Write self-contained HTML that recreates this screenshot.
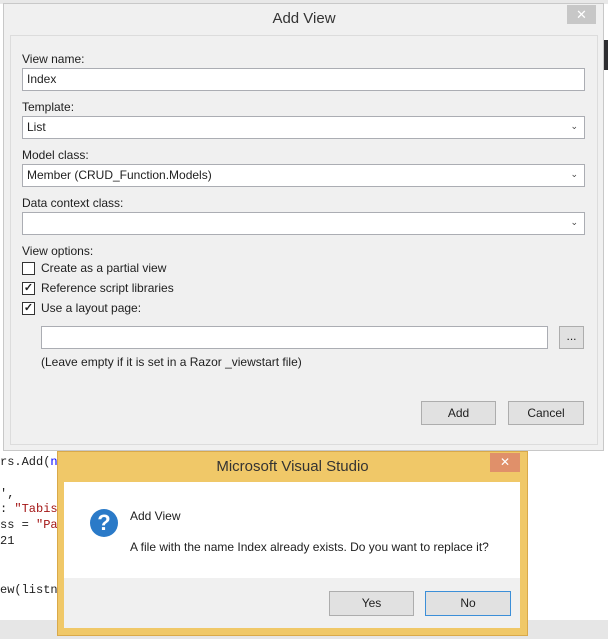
<!DOCTYPE html>
<html><head><style>
*{box-sizing:border-box;margin:0;padding:0}
body{width:608px;height:639px;overflow:hidden;background:#fff;font-family:"Liberation Sans",sans-serif;font-size:12px;color:#1e1e1e;position:relative}
.a{position:absolute}
.win{left:3px;top:3px;width:601px;height:448px;background:#f0f0f0;border:1px solid #c8c8c8}
.panel{left:10px;top:35px;width:588px;height:410px;background:#f0f0f0;border:1px solid #dcdcdc}
.lbl{left:22px;font-size:12px}
.inp{left:22px;width:563px;height:23px;background:#fff;border:1px solid #abadb3;padding:3px 4px}
.arr{position:absolute;right:6px;top:4px;font-size:9px;color:#444}
.cb{left:22px;width:13px;height:13px;background:#fff;border:1px solid #333;font-size:11px;line-height:11px;text-align:center;font-weight:bold}
.btn{background:#e1e1e1;border:1px solid #adadad;text-align:center;line-height:22px}
.code{font-family:"Liberation Mono",monospace;font-size:12px;left:0}
</style></head><body>
<div class="a" style="left:0;top:0;width:608px;height:4px;background:#e8e8e8"></div>
<div class="a" style="left:601px;top:40px;width:7px;height:30px;background:#2d2d30"></div>
<div class="a win"></div>
<div class="a" style="left:0;top:10px;width:608px;text-align:center;font-size:15px;color:#333">Add View</div>
<div class="a" style="left:567px;top:5px;width:29px;height:19px;background:#c7c7c7;color:#fff;text-align:center;line-height:19px;font-size:13px">✕</div>
<div class="a panel"></div>
<div class="a lbl" style="top:52px">View name:</div>
<div class="a inp" style="top:68px">Index</div>
<div class="a lbl" style="top:100px">Template:</div>
<div class="a inp" style="top:116px">List<span class="arr">⌄</span></div>
<div class="a lbl" style="top:148px">Model class:</div>
<div class="a inp" style="top:164px">Member (CRUD_Function.Models)<span class="arr">⌄</span></div>
<div class="a lbl" style="top:196px">Data context class:</div>
<div class="a inp" style="top:212px"><span class="arr">⌄</span></div>
<div class="a lbl" style="top:244px">View options:</div>
<div class="a cb" style="top:262px"></div><div class="a" style="left:41px;top:261px">Create as a partial view</div>
<div class="a cb" style="top:282px">✓</div><div class="a" style="left:41px;top:281px">Reference script libraries</div>
<div class="a cb" style="top:302px">✓</div><div class="a" style="left:41px;top:301px">Use a layout page:</div>
<div class="a" style="left:41px;top:326px;width:507px;height:23px;background:#fff;border:1px solid #abadb3"></div>
<div class="a btn" style="left:559px;top:326px;width:25px;height:23px;line-height:18px">...</div>
<div class="a" style="left:41px;top:355px">(Leave empty if it is set in a Razor _viewstart file)</div>
<div class="a btn" style="left:421px;top:401px;width:75px;height:24px">Add</div>
<div class="a btn" style="left:508px;top:401px;width:76px;height:24px">Cancel</div>

<div class="a code" style="top:455px">rs.Add(<span style="color:#00f">ne</span></div>
<div class="a code" style="top:487px">',</div>
<div class="a code" style="top:502px">: <span style="color:#a31515">"Tabish</span></div>
<div class="a code" style="top:518px">ss = <span style="color:#a31515">"Pak</span></div>
<div class="a code" style="top:534px"> 21</div>
<div class="a code" style="top:583px">ew(listnu</div>
<div class="a" style="left:0;top:620px;width:608px;height:19px;background:#e6e6e6"></div>

<div class="a" style="left:57px;top:451px;width:471px;height:185px;background:#f0c868;border:1px solid #d9a94a"></div>
<div class="a" style="left:57px;top:458px;width:471px;text-align:center;font-size:15px;color:#333">Microsoft Visual Studio</div>
<div class="a" style="left:490px;top:453px;width:30px;height:19px;background:#e0906a;color:#fff;text-align:center;line-height:19px;font-size:12px">✕</div>
<div class="a" style="left:64px;top:482px;width:456px;height:96px;background:#fff"></div>
<div class="a" style="left:64px;top:578px;width:456px;height:50px;background:#f0f0f0"></div>
<div class="a" style="left:90px;top:509px;width:28px;height:28px;border-radius:50%;background:#2a7ac8;color:#fff;font-size:22px;font-weight:bold;text-align:center;line-height:28px">?</div>
<div class="a" style="left:130px;top:509px">Add View</div>
<div class="a" style="left:130px;top:540px">A file with the name Index already exists. Do you want to replace it?</div>
<div class="a btn" style="left:329px;top:591px;width:85px;height:25px">Yes</div>
<div class="a btn" style="left:425px;top:591px;width:86px;height:25px;border-color:#3c8fd8">No</div>
</body></html>
